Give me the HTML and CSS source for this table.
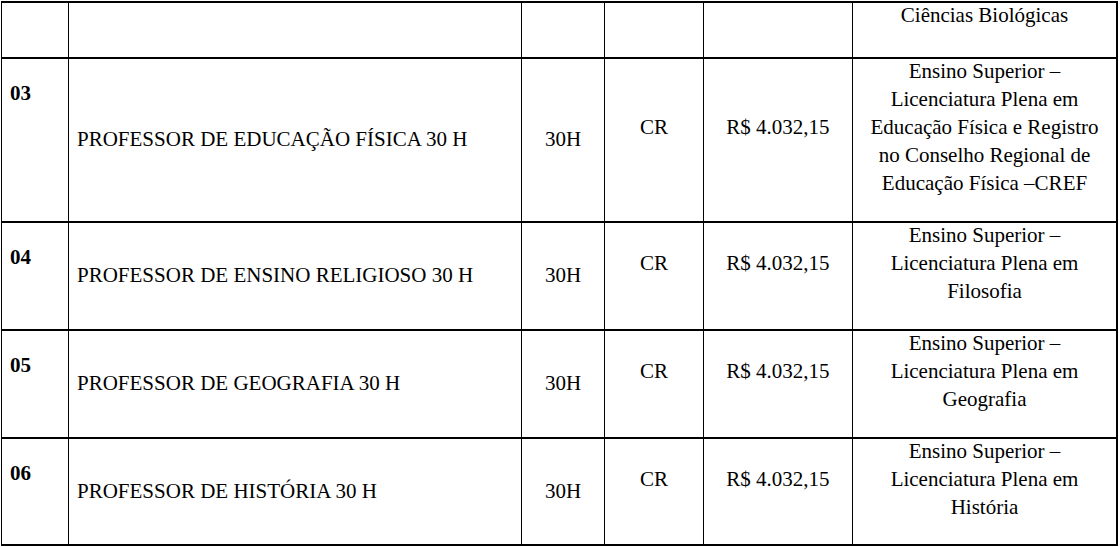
FILE: index.html
```html
<!DOCTYPE html>
<html lang="pt-BR">
<head>
<meta charset="utf-8">
<title>Tabela de cargos</title>
<link rel="stylesheet" href="styles.css">
</head>
<body>
<table class="cargos">
  <colgroup>
    <col class="c-num">
    <col class="c-cargo">
    <col class="c-carga">
    <col class="c-vagas">
    <col class="c-venc">
    <col class="c-req">
  </colgroup>
  <tbody>
    <tr class="r-head">
      <td></td><td></td><td></td><td></td><td></td>
      <td class="req"><div class="req-text">Ciências Biológicas</div></td>
    </tr>
    <tr class="r-tall">
      <td class="num">03</td>
      <td class="cargo">PROFESSOR DE EDUCAÇÃO FÍSICA 30 H</td>
      <td class="mid">30H</td>
      <td class="mid raised">CR</td>
      <td class="mid raised">R$ 4.032,15</td>
      <td class="req"><div class="req-text">Ensino Superior –<br>Licenciatura Plena em<br>Educação Física e Registro<br>no Conselho Regional de<br>Educação Física –CREF</div></td>
    </tr>
    <tr class="r-std">
      <td class="num">04</td>
      <td class="cargo">PROFESSOR DE ENSINO RELIGIOSO 30 H</td>
      <td class="mid">30H</td>
      <td class="mid raised">CR</td>
      <td class="mid raised">R$ 4.032,15</td>
      <td class="req"><div class="req-text">Ensino Superior –<br>Licenciatura Plena em<br>Filosofia</div></td>
    </tr>
    <tr class="r-std">
      <td class="num">05</td>
      <td class="cargo">PROFESSOR DE GEOGRAFIA 30 H</td>
      <td class="mid">30H</td>
      <td class="mid raised">CR</td>
      <td class="mid raised">R$ 4.032,15</td>
      <td class="req"><div class="req-text">Ensino Superior –<br>Licenciatura Plena em<br>Geografia</div></td>
    </tr>
    <tr class="r-last">
      <td class="num">06</td>
      <td class="cargo">PROFESSOR DE HISTÓRIA 30 H</td>
      <td class="mid">30H</td>
      <td class="mid raised">CR</td>
      <td class="mid raised">R$ 4.032,15</td>
      <td class="req"><div class="req-text">Ensino Superior –<br>Licenciatura Plena em<br>História</div></td>
    </tr>
  </tbody>
</table>
</body>
</html>
```

FILE: styles.css
```css
html, body {
  margin: 0;
  padding: 0;
  background: #ffffff;
}

body {
  padding: 1px 0 0 1px;
  font-family: "Liberation Serif", "Times New Roman", serif;
  font-size: 21px;
  line-height: 28px;
  color: #000000;
}

.cargos {
  border-collapse: separate;
  border-spacing: 0;
  table-layout: fixed;
  width: 1116px;
  border-top: 2px solid #000;
  border-left: 1px solid #000;
  font: inherit;
}

.c-num { width: 67px; }
.c-cargo { width: 453px; }
.c-carga { width: 83px; }
.c-vagas { width: 99px; }
.c-venc { width: 149px; }
.c-req { width: 265px; }

.cargos td {
  box-sizing: border-box;
  padding: 0;
  border-right: 1px solid #000;
  border-bottom: 2px solid #000;
  vertical-align: top;
  white-space: nowrap;
}

.cargos td:last-child {
  border-right-width: 2px;
}

.r-head td { height: 56px; }
.r-tall td { height: 164px; }
.r-std td { height: 108px; }
.r-last td { height: 107px; }

.cargos .num {
  font-weight: bold;
  padding: 20px 0 0 8px;
}

.cargos .cargo {
  vertical-align: middle;
  padding: 0 0 2px 8px;
}

.cargos .mid {
  text-align: center;
  vertical-align: middle;
  padding-bottom: 2px;
}

.cargos .raised {
  padding-bottom: 26px;
}

.cargos .req {
  text-align: center;
}

.req-text {
  margin-top: -2px;
}
```
